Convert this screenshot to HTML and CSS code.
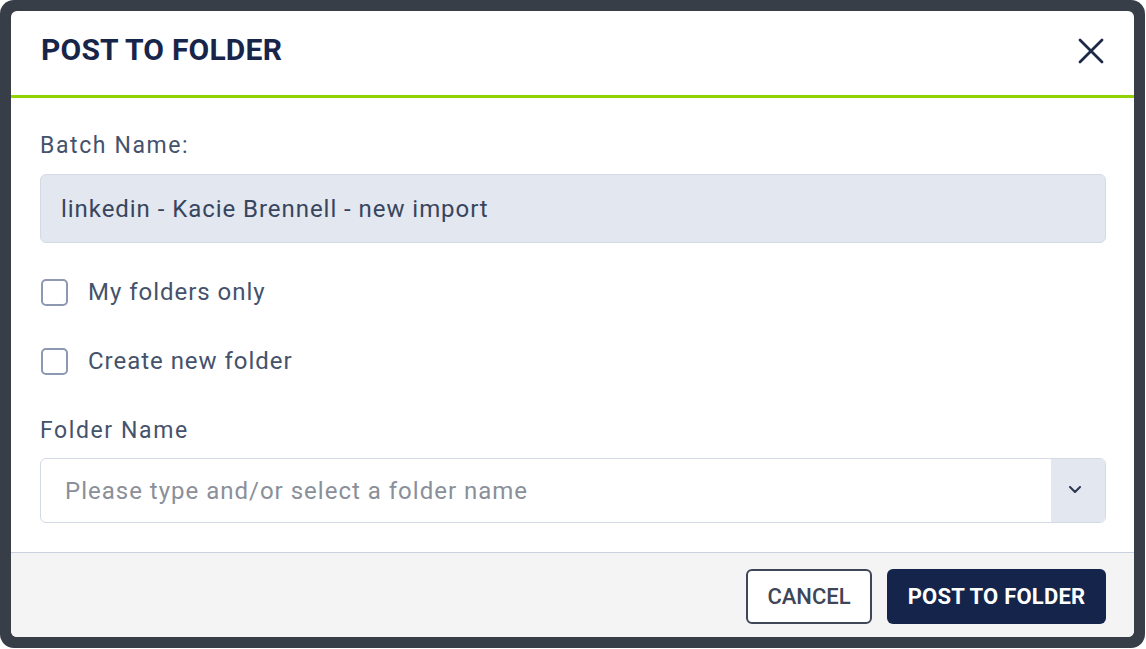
FILE: index.html
```html
<!DOCTYPE html>
<html>
<head>
<meta charset="utf-8">
<link rel="stylesheet" href="styles.css">
</head>
<body>
<div class="frame">
  <div class="dialog">
    <div class="header">
      <h1 class="title">POST TO FOLDER</h1>
      <button class="close" aria-label="Close">
        <svg width="26" height="26" viewBox="0 0 26 26"><path d="M2 2 L24 24 M24 2 L2 24" stroke="#1c2a48" stroke-width="2.8" stroke-linecap="round" fill="none"/></svg>
      </button>
    </div>
    <div class="body">
      <label class="label label-batch">Batch Name:</label>
      <div class="input readonly">linkedin - Kacie Brennell - new import</div>
      <div class="check-row check-first">
        <span class="checkbox"></span>
        <span class="check-text">My folders only</span>
      </div>
      <div class="check-row check-second">
        <span class="checkbox"></span>
        <span class="check-text">Create new folder</span>
      </div>
      <label class="label label-folder">Folder Name</label>
      <div class="select">
        <span class="placeholder">Please type and/or select a folder name</span>
        <span class="select-btn">
          <svg width="12" height="7" viewBox="0 0 12 7"><path d="M1 1 L6 6 L11 1" stroke="#2a3752" stroke-width="2" fill="none" stroke-linecap="round" stroke-linejoin="round"/></svg>
        </span>
      </div>
    </div>
    <div class="footer">
      <button class="btn btn-cancel">CANCEL</button>
      <button class="btn btn-primary">POST TO FOLDER</button>
    </div>
  </div>
</div>
</body>
</html>
```

FILE: styles.css
```css
* { box-sizing: border-box; }
html, body { margin: 0; padding: 0; background: #ffffff; }
body { font-family: Roboto, "Liberation Sans", sans-serif; }

.frame {
  width: 1145px;
  height: 648px;
  background: #383e48;
  border-radius: 14px;
  padding: 11px;
}
.dialog {
  background: #ffffff;
  border-radius: 6px;
  height: 626px;
  overflow: hidden;
  display: flex;
  flex-direction: column;
}
.header {
  height: 87px;
  border-bottom: 3px solid #8fd400;
  display: flex;
  align-items: center;
  justify-content: space-between;
  padding: 0 30px 8px 30px;
}
.title {
  margin: 0;
  font-size: 30px;
  font-weight: 700;
  color: #17254a;
  letter-spacing: 0.2px;
}
.close {
  background: none;
  border: none;
  padding: 0;
  width: 26px;
  height: 26px;
  margin-right: 0;
  margin-top: 4px;
}
.close svg { display: block; }

.body {
  flex: 1;
  padding: 35px 28px 0 29px;
  display: flex;
  flex-direction: column;
}
.label {
  font-size: 23px;
  color: #45526b;
  line-height: 26px;
  letter-spacing: 1.6px;
}
.label-batch { margin-bottom: 15px; }
.input {
  height: 69px;
  background: #e3e7ef;
  border: 1px solid #d3dae6;
  border-radius: 6px;
  display: flex;
  align-items: center;
  padding: 0 20px;
  font-size: 24px;
  letter-spacing: 0.95px;
  color: #38455e;
}
.check-row {
  display: flex;
  align-items: center;
  gap: 20px;
  height: 28px;
}
.check-first { margin-top: 35px; }
.check-second { margin-top: 41px; }
.checkbox {
  width: 27px;
  height: 27px;
  border: 2px solid #8d99b2;
  border-radius: 5px;
  margin-left: 1px;
  background: #fff;
  flex: none;
}
.check-text {
  font-size: 24px;
  letter-spacing: 0.97px;
  color: #45526b;
}
.label-folder { margin-top: 43px; margin-bottom: 14px; }
.select {
  height: 65px;
  border: 1px solid #d3dae6;
  border-radius: 6px;
  display: flex;
  align-items: stretch;
  overflow: hidden;
}
.placeholder {
  flex: 1;
  display: flex;
  align-items: center;
  padding-left: 24px;
  font-size: 24px;
  letter-spacing: 1px;
  color: #8a8f99;
}
.select-btn {
  width: 54px;
  background: #e3e7ef;
  display: flex;
  align-items: center;
  justify-content: center;
  padding-right: 7px;
}
.select-btn svg { display: block; margin-top: -2px; }

.footer {
  height: 85px;
  border-top: 1px solid #c8d1df;
  background: #f4f4f5;
  display: flex;
  justify-content: flex-end;
  align-items: flex-start;
  gap: 15px;
  padding: 16px 28px 0 0;
}
.btn {
  height: 55px;
  border-radius: 6px;
  font-family: Roboto, "Liberation Sans", sans-serif;
  font-size: 22px;
  padding: 0;
  cursor: pointer;
}
.btn-cancel {
  width: 126px;
  background: #ffffff;
  border: 2px solid #3e4657;
  color: #3e4657;
  font-weight: 500;
}
.btn-primary {
  width: 219px;
  background: #14244a;
  border: none;
  color: #ffffff;
  font-weight: 700;
  letter-spacing: 0.2px;
}
```
